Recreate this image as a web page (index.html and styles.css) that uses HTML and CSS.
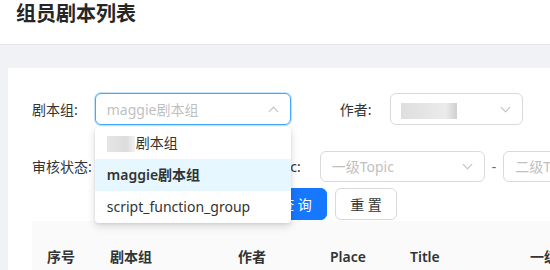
FILE: index.html
```html
<!DOCTYPE html>
<html lang="zh-CN">
<head>
  <meta charset="UTF-8" />
  <meta name="viewport" content="width=device-width, initial-scale=1" />
  <title>组员剧本列表</title>
  <link rel="stylesheet" href="styles.css">
</head>
<body>

<header class="page-header">
  <h1>组员剧本列表</h1>
</header>

<main class="page-content">
  <div class="card">
    <form class="filter">
      <div class="filter-row">
        <div class="form-item">
          <label class="form-label">剧本组:</label>
          <div class="select select-group is-open">
            <span class="select-value placeholder">maggie剧本组</span>
            <span class="select-arrow up"></span>
            <ul class="select-dropdown">
              <li class="option"><span class="blur-block small"></span>剧本组</li>
              <li class="option active">maggie剧本组</li>
              <li class="option">script_function_group</li>
            </ul>
          </div>
        </div>
        <div class="form-item item-author">
          <label class="form-label">作者:</label>
          <div class="select select-author">
            <span class="select-value"><span class="blur-block"></span></span>
            <span class="select-arrow"></span>
          </div>
        </div>
      </div>

      <div class="filter-row">
        <div class="form-item">
          <label class="form-label">审核状态:</label>
          <div class="select select-status">
            <span class="select-value"></span>
            <span class="select-arrow"></span>
          </div>
        </div>
        <div class="form-item item-topic">
          <label class="form-label">Topic:</label>
          <div class="select select-topic">
            <span class="select-value placeholder">一级Topic</span>
            <span class="select-arrow"></span>
          </div>
          <span class="range-sep">-</span>
          <div class="select select-topic">
            <span class="select-value placeholder">二级Topic</span>
            <span class="select-arrow"></span>
          </div>
        </div>
      </div>

      <div class="filter-actions">
        <button type="button" class="btn btn-primary">查 询</button>
        <button type="button" class="btn">重 置</button>
      </div>
    </form>

    <table class="data-table">
      <thead>
        <tr>
          <th class="col-index">序号</th>
          <th class="col-group">剧本组</th>
          <th class="col-author">作者</th>
          <th class="col-place">Place</th>
          <th class="col-title">Title</th>
          <th class="col-topic">一级Topic</th>
        </tr>
      </thead>
    </table>
  </div>
</main>

</body>
</html>
```

FILE: styles.css
```css
html, body {
  margin: 0;
  padding: 0;
}

body {
  font-family: "Noto Sans", "Noto Sans CJK SC", sans-serif;
  font-size: 14px;
  color: #333;
  background: #f0f2f5;
  width: 550px;
  height: 270px;
  overflow: hidden;
}

.page-header {
  background: #fff;
  height: 44px;
  border-bottom: 1px solid #e4e6ea;
  padding-left: 16px;
}

.page-header h1 {
  margin: 0;
  font-size: 20px;
  font-weight: 600;
  line-height: 28px;
  color: #262626;
}

.page-content {
  padding: 23px 0 0 8px;
}

.card {
  background: #fff;
  width: 700px;
  padding: 25px 24px 0 24px;
  min-height: 220px;
}

/* formularz filtrów */
.filter-row {
  display: flex;
  align-items: center;
  height: 32px;
  margin-bottom: 25px;
}

.form-item {
  display: flex;
  align-items: center;
}

.form-label {
  color: #333;
  white-space: nowrap;
  margin-right: 17px;
}

.item-author {
  margin-left: 49px;
}

.item-author .form-label {
  margin-right: 18px;
}

.item-topic {
  margin-left: 24px;
}

.item-topic .form-label {
  margin-right: 19px;
}

.select {
  position: relative;
  box-sizing: border-box;
  height: 32px;
  border: 1px solid #d9d9d9;
  border-radius: 6px;
  background: #fff;
  display: flex;
  align-items: center;
  padding: 0 11px;
}

.select-group {
  width: 196px;
}

.select-group.is-open {
  border-color: #40a9ff;
  box-shadow: 0 0 0 1px rgba(24, 144, 255, 0.25);
}

.select-author {
  width: 133px;
  padding-left: 10px;
}

.select-status {
  width: 130px;
}

.select-topic {
  width: 165px;
  height: 31px;
}

.range-sep {
  margin: 0 7px;
  color: #666;
}

.select-value {
  flex: 1;
  white-space: nowrap;
  overflow: hidden;
}

.select-value.placeholder {
  color: #bfbfbf;
}

.select-arrow {
  width: 6px;
  height: 6px;
  border-right: 1px solid #bfbfbf;
  border-bottom: 1px solid #bfbfbf;
  transform: rotate(45deg);
  margin: -4px 2px 0 0;
}

.select-arrow.up {
  transform: rotate(-135deg);
  margin-top: 4px;
}

.blur-block {
  display: inline-block;
  vertical-align: middle;
  width: 56px;
  height: 16px;
  background: linear-gradient(90deg, #dedede, #ebebeb 80%, #cfcfcf);
  filter: blur(0.6px);
}

.blur-block.small {
  width: 28px;
  margin-right: 1px;
  background: linear-gradient(90deg, #e6e6e6, #dcdcdc 70%, #f2f2f2);
}

/* rozwijana lista */
.select-dropdown {
  position: absolute;
  top: 33px;
  left: -1px;
  width: 196px;
  margin: 0;
  padding: 0;
  list-style: none;
  background: #fff;
  border-radius: 4px;
  box-shadow: 0 3px 8px rgba(0, 0, 0, 0.15), 0 1px 3px rgba(0, 0, 0, 0.08);
  z-index: 10;
}

.option {
  height: 32px;
  line-height: 32px;
  padding: 0 12px;
  color: #333;
  white-space: nowrap;
}

.option.active {
  background: #e6f7ff;
  font-weight: 600;
}

.filter-actions {
  display: flex;
  gap: 8px;
  margin: -19px 0 0 233px;
}

.btn {
  font-family: inherit;
  font-size: 14px;
  height: 32px;
  width: 62px;
  padding: 0;
  border: 1px solid #d9d9d9;
  border-radius: 6px;
  background: #fff;
  color: #333;
  cursor: pointer;
}

.btn-primary {
  background: #1677ff;
  border-color: #1677ff;
  color: #fff;
}

/* tabela */
.data-table {
  margin-top: 1px;
  border-collapse: collapse;
  table-layout: fixed;
  width: 640px;
}

.data-table th {
  background: #fafafa;
  text-align: left;
  font-weight: 600;
  color: #333;
  height: 70px;
  padding: 0 0 0 15px;
  white-space: nowrap;
}

.col-index { width: 48px; }
.col-group { width: 113px; }
.col-author { width: 77px; }
.col-place { width: 65px; }
.col-title { width: 105px; }
```
